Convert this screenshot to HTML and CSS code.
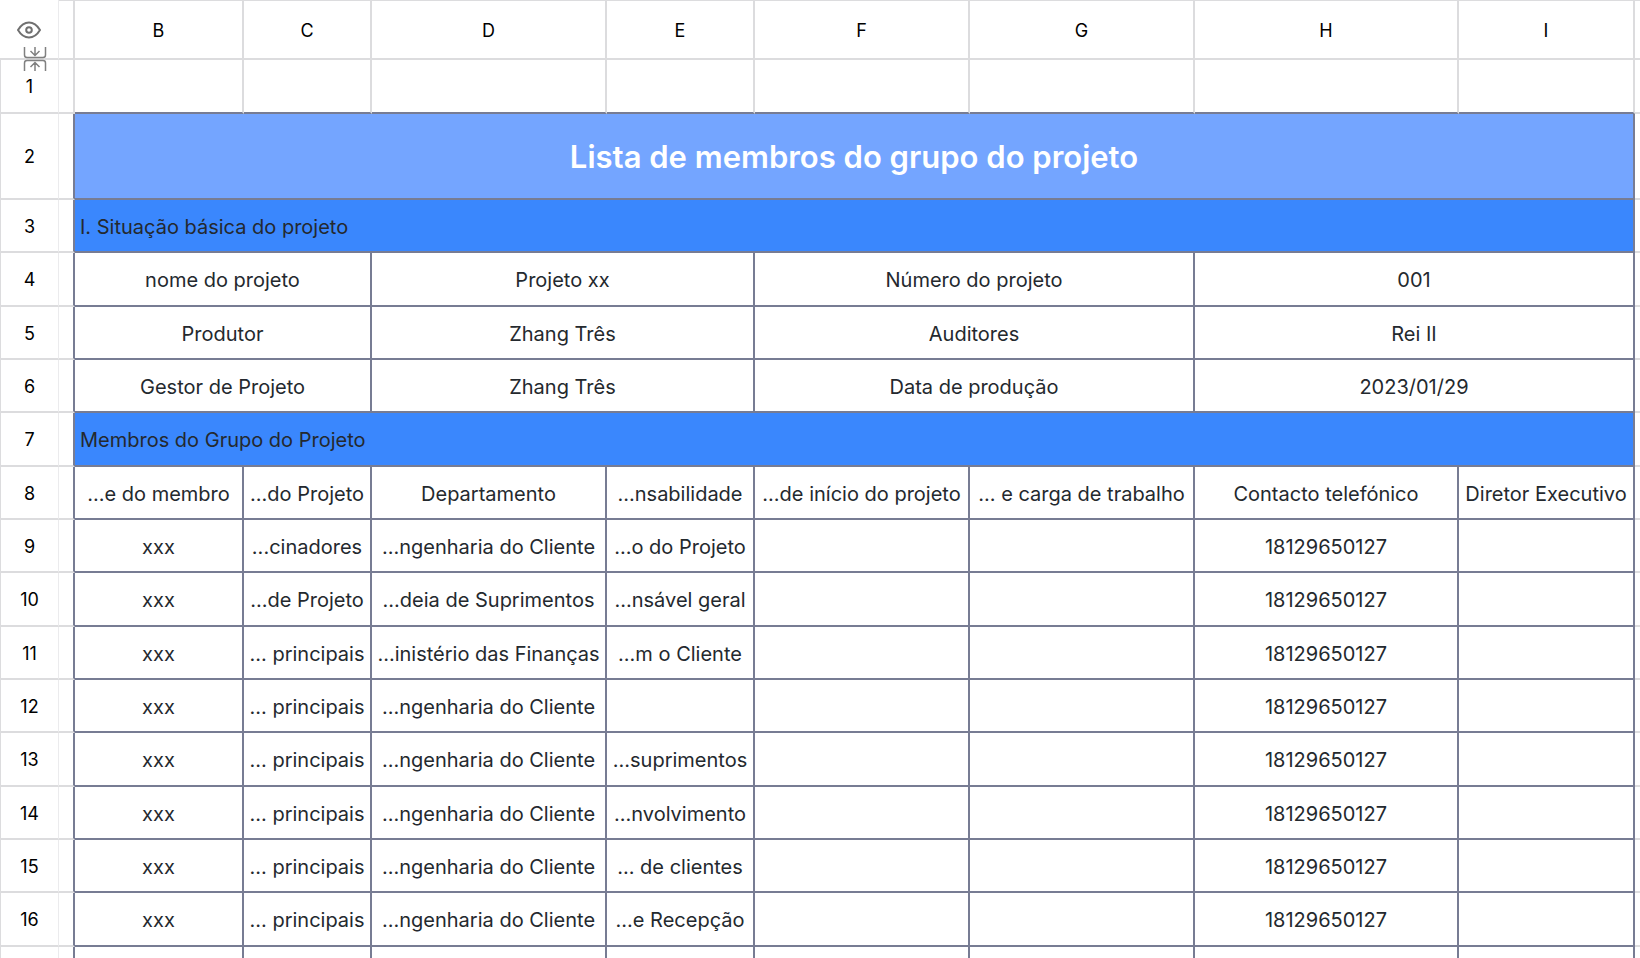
FILE: index.html
```
<!DOCTYPE html>
<html lang="pt">
<head>
    <meta charset="UTF-8">
    <meta name="viewport" content="width=device-width, initial-scale=1.0">
    <title>Lista de membros do grupo do projeto</title>
    <link rel="stylesheet" href="styles.css">
</head>
<body>
    <main class="viewer">
        <table class="sheet">
            <colgroup>
                <col class="col-num">
                <col class="col-gap">
                <col class="col-b">
                <col class="col-c">
                <col class="col-d">
                <col class="col-e">
                <col class="col-f">
                <col class="col-g">
                <col class="col-h">
                <col class="col-i">
                <col class="col-j">
            </colgroup>
            <!-- Column letters -->
            <thead>
                <tr>
                    <td class="corner">
                        <button type="button" class="icon-btn" aria-label="Mostrar">
                            <svg width="24" height="18" viewBox="0 0 24 18" fill="none" stroke="#707070" stroke-width="2">
                                <path d="M1 9C4 4 7.500 1.500 12 1.500S20 4 23 9c-3 5-6.500 7.500-11 7.500S4 14 1 9z"/>
                                <circle cx="12" cy="9" r="2.800"/>
                            </svg>
                        </button>
                        <button type="button" class="icon-btn expand-btn" aria-label="Expandir">
                            <svg width="24" height="26" viewBox="0 0 24 26" fill="none" stroke="#808080" stroke-width="1.500">
                                <path d="M1.500 1v8q0 2.500 2.500 2.500h16q2.500 0 2.500-2.500V1M12 1v8.500M7.500 5l4.500 4.500L16.500 5"/>
                                <path d="M1.500 25v-8q0-2.500 2.500-2.500h16q2.500 0 2.500 2.500v8M12 25v-8.500M7.500 21l4.500-4.500 4.500 4.500"/>
                            </svg>
                        </button>
                    </td>
                    <td></td>
                    <th scope="col">B</th>
                    <th scope="col">C</th>
                    <th scope="col">D</th>
                    <th scope="col">E</th>
                    <th scope="col">F</th>
                    <th scope="col">G</th>
                    <th scope="col">H</th>
                    <th scope="col">I</th>
                    <td></td>
                </tr>
            </thead>
            <tbody>
                <tr class="blank-row">
                    <th scope="row">1</th>
                    <td class="gap"></td>
                    <td></td><td></td><td></td><td></td><td></td><td></td><td></td><td></td>
                    <td class="edge"></td>
                </tr>
                <tr class="title-row">
                    <th scope="row">2</th>
                    <td class="gap"></td>
                    <td class="title" colspan="8">Lista de membros do grupo do projeto</td>
                    <td class="edge"></td>
                </tr>
                <!-- Project details -->
                <tr>
                    <th scope="row">3</th>
                    <td class="gap"></td>
                    <td class="section" colspan="8">I. Situação básica do projeto</td>
                    <td class="edge"></td>
                </tr>
                <tr>
                    <th scope="row">4</th>
                    <td class="gap"></td>
                    <td colspan="2">nome do projeto</td>
                    <td colspan="2">Projeto xx</td>
                    <td colspan="2">Número do projeto</td>
                    <td colspan="2">001</td>
                    <td class="edge"></td>
                </tr>
                <tr>
                    <th scope="row">5</th>
                    <td class="gap"></td>
                    <td colspan="2">Produtor</td>
                    <td colspan="2">Zhang Três</td>
                    <td colspan="2">Auditores</td>
                    <td colspan="2">Rei II</td>
                    <td class="edge"></td>
                </tr>
                <tr>
                    <th scope="row">6</th>
                    <td class="gap"></td>
                    <td colspan="2">Gestor de Projeto</td>
                    <td colspan="2">Zhang Três</td>
                    <td colspan="2">Data de produção</td>
                    <td colspan="2">2023/01/29</td>
                    <td class="edge"></td>
                </tr>
                <!-- Members -->
                <tr>
                    <th scope="row">7</th>
                    <td class="gap"></td>
                    <td class="section" colspan="8">Membros do Grupo do Projeto</td>
                    <td class="edge"></td>
                </tr>
                <tr>
                    <th scope="row">8</th>
                    <td class="gap"></td>
                    <td>...e do membro</td>
                    <td>...do Projeto</td>
                    <td>Departamento</td>
                    <td>...nsabilidade</td>
                    <td>...de início do projeto</td>
                    <td>... e carga de trabalho</td>
                    <td>Contacto telefónico</td>
                    <td>Diretor Executivo</td>
                    <td class="edge"></td>
                </tr>
                <tr>
                    <th scope="row">9</th>
                    <td class="gap"></td>
                    <td>xxx</td>
                    <td>...cinadores</td>
                    <td>...ngenharia do Cliente</td>
                    <td>...o do Projeto</td>
                    <td></td>
                    <td></td>
                    <td>18129650127</td>
                    <td></td>
                    <td class="edge"></td>
                </tr>
                <tr>
                    <th scope="row">10</th>
                    <td class="gap"></td>
                    <td>xxx</td>
                    <td>...de Projeto</td>
                    <td>...deia de Suprimentos</td>
                    <td>...nsável geral</td>
                    <td></td>
                    <td></td>
                    <td>18129650127</td>
                    <td></td>
                    <td class="edge"></td>
                </tr>
                <tr>
                    <th scope="row">11</th>
                    <td class="gap"></td>
                    <td>xxx</td>
                    <td>... principais</td>
                    <td>...inistério das Finanças</td>
                    <td>...m o Cliente</td>
                    <td></td>
                    <td></td>
                    <td>18129650127</td>
                    <td></td>
                    <td class="edge"></td>
                </tr>
                <tr>
                    <th scope="row">12</th>
                    <td class="gap"></td>
                    <td>xxx</td>
                    <td>... principais</td>
                    <td>...ngenharia do Cliente</td>
                    <td></td>
                    <td></td>
                    <td></td>
                    <td>18129650127</td>
                    <td></td>
                    <td class="edge"></td>
                </tr>
                <tr>
                    <th scope="row">13</th>
                    <td class="gap"></td>
                    <td>xxx</td>
                    <td>... principais</td>
                    <td>...ngenharia do Cliente</td>
                    <td>...suprimentos</td>
                    <td></td>
                    <td></td>
                    <td>18129650127</td>
                    <td></td>
                    <td class="edge"></td>
                </tr>
                <tr>
                    <th scope="row">14</th>
                    <td class="gap"></td>
                    <td>xxx</td>
                    <td>... principais</td>
                    <td>...ngenharia do Cliente</td>
                    <td>...nvolvimento</td>
                    <td></td>
                    <td></td>
                    <td>18129650127</td>
                    <td></td>
                    <td class="edge"></td>
                </tr>
                <tr>
                    <th scope="row">15</th>
                    <td class="gap"></td>
                    <td>xxx</td>
                    <td>... principais</td>
                    <td>...ngenharia do Cliente</td>
                    <td>... de clientes</td>
                    <td></td>
                    <td></td>
                    <td>18129650127</td>
                    <td></td>
                    <td class="edge"></td>
                </tr>
                <tr>
                    <th scope="row">16</th>
                    <td class="gap"></td>
                    <td>xxx</td>
                    <td>... principais</td>
                    <td>...ngenharia do Cliente</td>
                    <td>...e Recepção</td>
                    <td></td>
                    <td></td>
                    <td>18129650127</td>
                    <td></td>
                    <td class="edge"></td>
                </tr>
                <tr>
                    <th scope="row"></th>
                    <td class="gap"></td>
                    <td></td><td></td><td></td><td></td><td></td><td></td><td></td><td></td>
                    <td class="edge"></td>
                </tr>
            </tbody>
        </table>
    </main>
</body>
</html>
```
FILE: styles.css
```
* {
    box-sizing: border-box;
}

body {
    margin: 0;
    background-color: #fff;
    color: #24292e;
    font-family: Inter, "Liberation Sans", sans-serif;
    font-size: 20px;
    line-height: 24px;
}

.viewer {
    height: 100vh;
    overflow: hidden;
}

.sheet {
    width: 100%;
    table-layout: fixed;
    border-collapse: separate;
    border-spacing: 0;
}

/* Column widths */
.col-num { width: 59px; }
.col-gap { width: 16px; }
.col-b { width: 169px; }
.col-c { width: 128px; }
.col-d { width: 235px; }
.col-e { width: 148px; }
.col-f { width: 215px; }
.col-g { width: 225px; }
.col-h { width: 264px; }
.col-i { width: 176px; }
.col-j { width: 5px; }

th,
td {
    padding: 2px 0 0;
    text-align: center;
    vertical-align: middle;
    white-space: nowrap;
    border: 0 solid #dcdcde;
}

th {
    color: #000;
    font-size: 18px;
    font-weight: 400;
}

/* Column letters */
thead tr {
    height: 60px;
}

thead th,
thead td {
    border-width: 1px 2px 2px 0;
}

thead .corner {
    position: relative;
    border-top-width: 0;
    border-right: 1px solid #ebebed;
}

thead td:last-child {
    border-right-width: 0;
}

/* Rows */
tbody tr {
    height: 53px;
}

tbody tr:nth-child(3n+1) {
    height: 54px;
}

tbody .title-row {
    height: 86px;
}

tbody th {
    border-width: 0 1px 2px;
    border-right-color: #ebebed;
}

tbody td {
    border-width: 0 2px 2px 0;
    border-color: #777c93;
}

tbody .gap {
    border-bottom-color: #dcdcde;
}

tbody .edge {
    border-right-width: 0;
    border-bottom-color: #dcdcde;
}

.blank-row td {
    border-right-color: #dcdcde;
}

.title {
    background-color: #74a5ff;
    color: #fff;
    font-size: 31px;
    font-weight: 600;
    line-height: 40px;
}

.section {
    padding-left: 5px;
    background-color: #3a87fd;
    text-align: left;
}

/* Corner controls */
.icon-btn {
    display: block;
    margin: 0 auto;
    padding: 0;
    border: none;
    background: none;
    cursor: pointer;
}

.icon-btn svg {
    display: block;
}

.expand-btn {
    position: absolute;
    top: 46px;
    left: 23px;
}
```
